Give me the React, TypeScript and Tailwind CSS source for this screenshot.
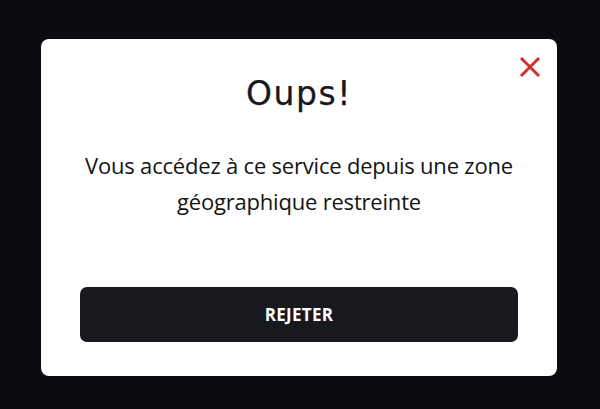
import React from "react";

function CloseIcon() {
  return (
    <svg width="22" height="22" viewBox="0 0 22 22" fill="none">
      <path d="M2 2 L20 20 M20 2 L2 20" stroke="#d2302a" strokeWidth="3" strokeLinecap="butt" />
    </svg>
  );
}

export default function App() {
  return (
    <div className="h-[409px] w-[600px] bg-[#0b0b11] flex justify-center pt-[39px] pr-[2px]" style={{ fontFamily: '"Open Sans", sans-serif' }}>
      <div className="relative w-[516px] h-[337px] bg-white rounded-[8px] flex flex-col items-center px-[39px]">
        <button className="absolute right-[16px] top-[17px]" aria-label="Fermer">
          <CloseIcon />
        </button>
        <h1 className="mt-[35px] text-[33px] leading-[40px] text-[#171724] font-['DejaVu_Sans',sans-serif] tracking-[1.5px] [-webkit-text-stroke:0.25px_#171724]">Oups!</h1>
        <p className="mt-[33px] text-center text-[22px] leading-[36px] text-[#141414] tracking-[-0.2px]">
          Vous accédez à ce service depuis une zone
          <br />
          géographique restreinte
        </p>
        <button className="mt-auto mb-[34px] w-full h-[55px] rounded-[7px] bg-[#18181f] text-white font-bold text-[17px] tracking-[0.3px]">
          REJETER
        </button>
      </div>
    </div>
  );
}
